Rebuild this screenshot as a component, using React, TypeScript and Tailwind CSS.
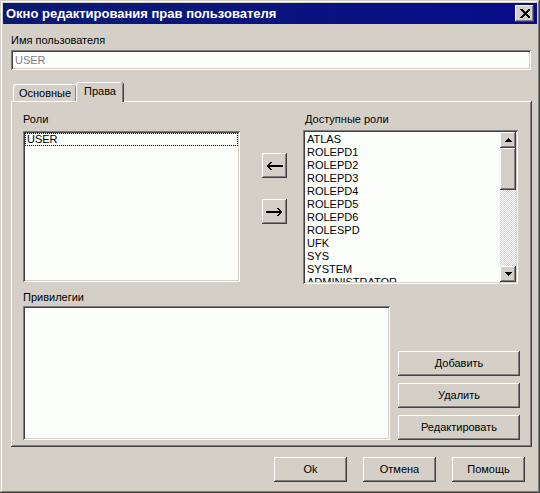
import React from "react";

// Classic Win2k-style bevels, done with stacked inset shadows.
const raised =
  "shadow-[inset_-1px_-1px_#404040,inset_1px_1px_#ffffff,inset_-2px_-2px_#808080,inset_2px_2px_#d4d0c8]";
const sunken =
  "shadow-[inset_1px_1px_#808080,inset_-1px_-1px_#ffffff,inset_2px_2px_#404040,inset_-2px_-2px_#d4d0c8]";

const font = "font-['Liberation_Sans',Arial,sans-serif]";

const availableRoles = [
  "ATLAS",
  "ROLEPD1",
  "ROLEPD2",
  "ROLEPD3",
  "ROLEPD4",
  "ROLEPD5",
  "ROLEPD6",
  "ROLESPD",
  "UFK",
  "SYS",
  "SYSTEM",
  "ADMINISTRATOR",
];

function Button({
  children,
  className = "",
}: {
  children: React.ReactNode;
  className?: string;
}) {
  return (
    <button
      className={`flex items-center justify-center bg-[#d4d0c8] text-[11px] text-black ${raised} ${className}`}
    >
      {children}
    </button>
  );
}

function ArrowGlyph({ dir }: { dir: "left" | "right" }) {
  return (
    <svg width="17" height="9" viewBox="0 0 17 9" shapeRendering="crispEdges">
      <g transform={dir === "right" ? "matrix(-1 0 0 1 17 0)" : undefined}>
        <rect x="1" y="4" width="16" height="2" fill="#000" />
        <rect x="1" y="4" width="2" height="1" fill="#000" />
        <rect x="2" y="3" width="2" height="1" fill="#000" />
        <rect x="3" y="2" width="2" height="1" fill="#000" />
        <rect x="4" y="1" width="2" height="1" fill="#000" />
        <rect x="2" y="6" width="2" height="1" fill="#000" />
        <rect x="3" y="7" width="2" height="1" fill="#000" />
        <rect x="4" y="8" width="2" height="1" fill="#000" />
      </g>
    </svg>
  );
}

function ScrollArrow({ up }: { up?: boolean }) {
  return (
    <div className={`flex h-[16px] w-[16px] items-center justify-center bg-[#d4d0c8] ${raised}`}>
      <svg width="7" height="4" viewBox="0 0 7 4" shapeRendering="crispEdges">
        <path d={up ? "M3 0h1v1h1v1h1v1h1v1H0V3h1V2h1V1h1z" : "M0 0h7v1H6v1H5v1H4v1H3V3H2V2H1V1H0z"} fill="#000" />
      </svg>
    </div>
  );
}

export default function App() {
  return (
    <div
      className={`relative flex h-[493px] w-[540px] flex-col bg-[#d4d0c8] p-[3px] text-black ${font} shadow-[inset_-1px_-1px_#404040,inset_1px_1px_#d4d0c8,inset_-2px_-2px_#808080,inset_2px_2px_#ffffff]`}
    >
      {/* title bar */}
      <div className="flex h-[21px] items-center justify-between bg-gradient-to-r from-[#0a1a72] to-[#0a0a8a] pl-[3px] pr-[3px]">
        <span className="text-[13px] font-bold leading-none text-white">
          Окно редактирования прав пользователя
        </span>
        <button className={`flex h-[17px] w-[19px] items-center justify-center bg-[#d4d0c8] ${raised}`}>
          <svg width="10" height="9" viewBox="0 0 10 9" shapeRendering="crispEdges">
            <path
              d="M0 0h2l3 3 3-3h2v1L6.5 4.5 10 8v1H8L5 6 2 9H0V8l3.5-3.5L0 1z"
              fill="#000"
            />
          </svg>
        </button>
      </div>

      <div className="flex flex-1 flex-col px-[8px]">
        <div className="mt-[10px] text-[11px] leading-[13px]">Имя пользователя</div>
        <div
          className={`mt-[3px] flex h-[20px] w-[520px] items-center bg-[#fcfefc] px-[4px] text-[11px] text-[#808080] ${sunken}`}
        >
          USER
        </div>

        {/* tabs */}
        <div className="mt-[12px] flex h-[19px] items-end pl-[2px]">
          <div className="flex h-[17px] w-[63px] items-center justify-center rounded-t-[3px] border-l border-t border-white bg-[#d4d0c8] text-[11px] shadow-[inset_-1px_0_#808080]">
            Основные
          </div>
          <div className="relative z-10 -mb-[1px] flex h-[20px] w-[47px] items-center justify-center rounded-t-[3px] border-l border-t border-white bg-[#d4d0c8] pb-[2px] text-[11px] shadow-[inset_-1px_0_#808080,1px_0_#404040]">
            Права
          </div>
        </div>

        {/* tab page */}
        <div className={`flex h-[346px] w-[521px] flex-col bg-[#d4d0c8] px-[12px] pt-[12px] ${raised}`}>
          <div className="flex">
            <div className="flex w-[217px] flex-col">
              <div className="text-[11px] leading-[13px]">Роли</div>
              <div className={`mt-[5px] h-[151px] bg-[#fcfefc] p-[2px] ${sunken}`}>
                <div className="h-[13px] border border-dotted border-black pl-[1px] text-[11px] leading-[11px]">
                  USER
                </div>
              </div>
            </div>

            <div className="ml-[22px] flex w-[25px] flex-col pt-[40px]">
              <Button className="h-[25px] w-[25px]">
                <ArrowGlyph dir="left" />
              </Button>
              <Button className="mt-[21px] h-[25px] w-[25px]">
                <ArrowGlyph dir="right" />
              </Button>
            </div>

            <div className="ml-[16px] flex w-[215px] flex-col">
              <div className="pl-[2px] text-[11px] leading-[13px]">Доступные роли</div>
              <div className={`mt-[4px] flex h-[154px] overflow-hidden bg-[#fcfefc] p-[2px] ${sunken}`}>
                <div className="flex-1 overflow-hidden pl-[2px] pt-[1px]">
                  {availableRoles.map((r) => (
                    <div key={r} className="h-[13px] text-[11px] leading-[13px]">
                      {r}
                    </div>
                  ))}
                </div>
                <div className="flex w-[16px] flex-col">
                  <ScrollArrow up />
                  <div className={`h-[42px] bg-[#d4d0c8] ${raised}`} />
                  <div className="flex-1 bg-[repeating-conic-gradient(#d4d0c8_0_25%,#ffffff_0_50%)] bg-[length:2px_2px]" />
                  <ScrollArrow />
                </div>
              </div>
            </div>
          </div>

          <div className="mt-[7px] flex items-end">
            <div className="flex w-[367px] flex-col">
              <div className="text-[11px] leading-[13px]">Привилегии</div>
              <div className={`mt-[2px] h-[134px] bg-[#fcfefc] ${sunken}`} />
            </div>
            <div className="ml-[8px] flex w-[122px] flex-col gap-[7px]">
              <Button className="h-[25px]">Добавить</Button>
              <Button className="h-[25px]">Удалить</Button>
              <Button className="h-[25px]">Редактировать</Button>
            </div>
          </div>
        </div>

        {/* dialog buttons */}
        <div className="mt-[10px] flex justify-end gap-[16px] pr-[4px]">
          <Button className="h-[25px] w-[73px]">Ok</Button>
          <Button className="h-[25px] w-[73px]">Отмена</Button>
          <Button className="h-[25px] w-[73px]">Помощь</Button>
        </div>
      </div>
    </div>
  );
}
